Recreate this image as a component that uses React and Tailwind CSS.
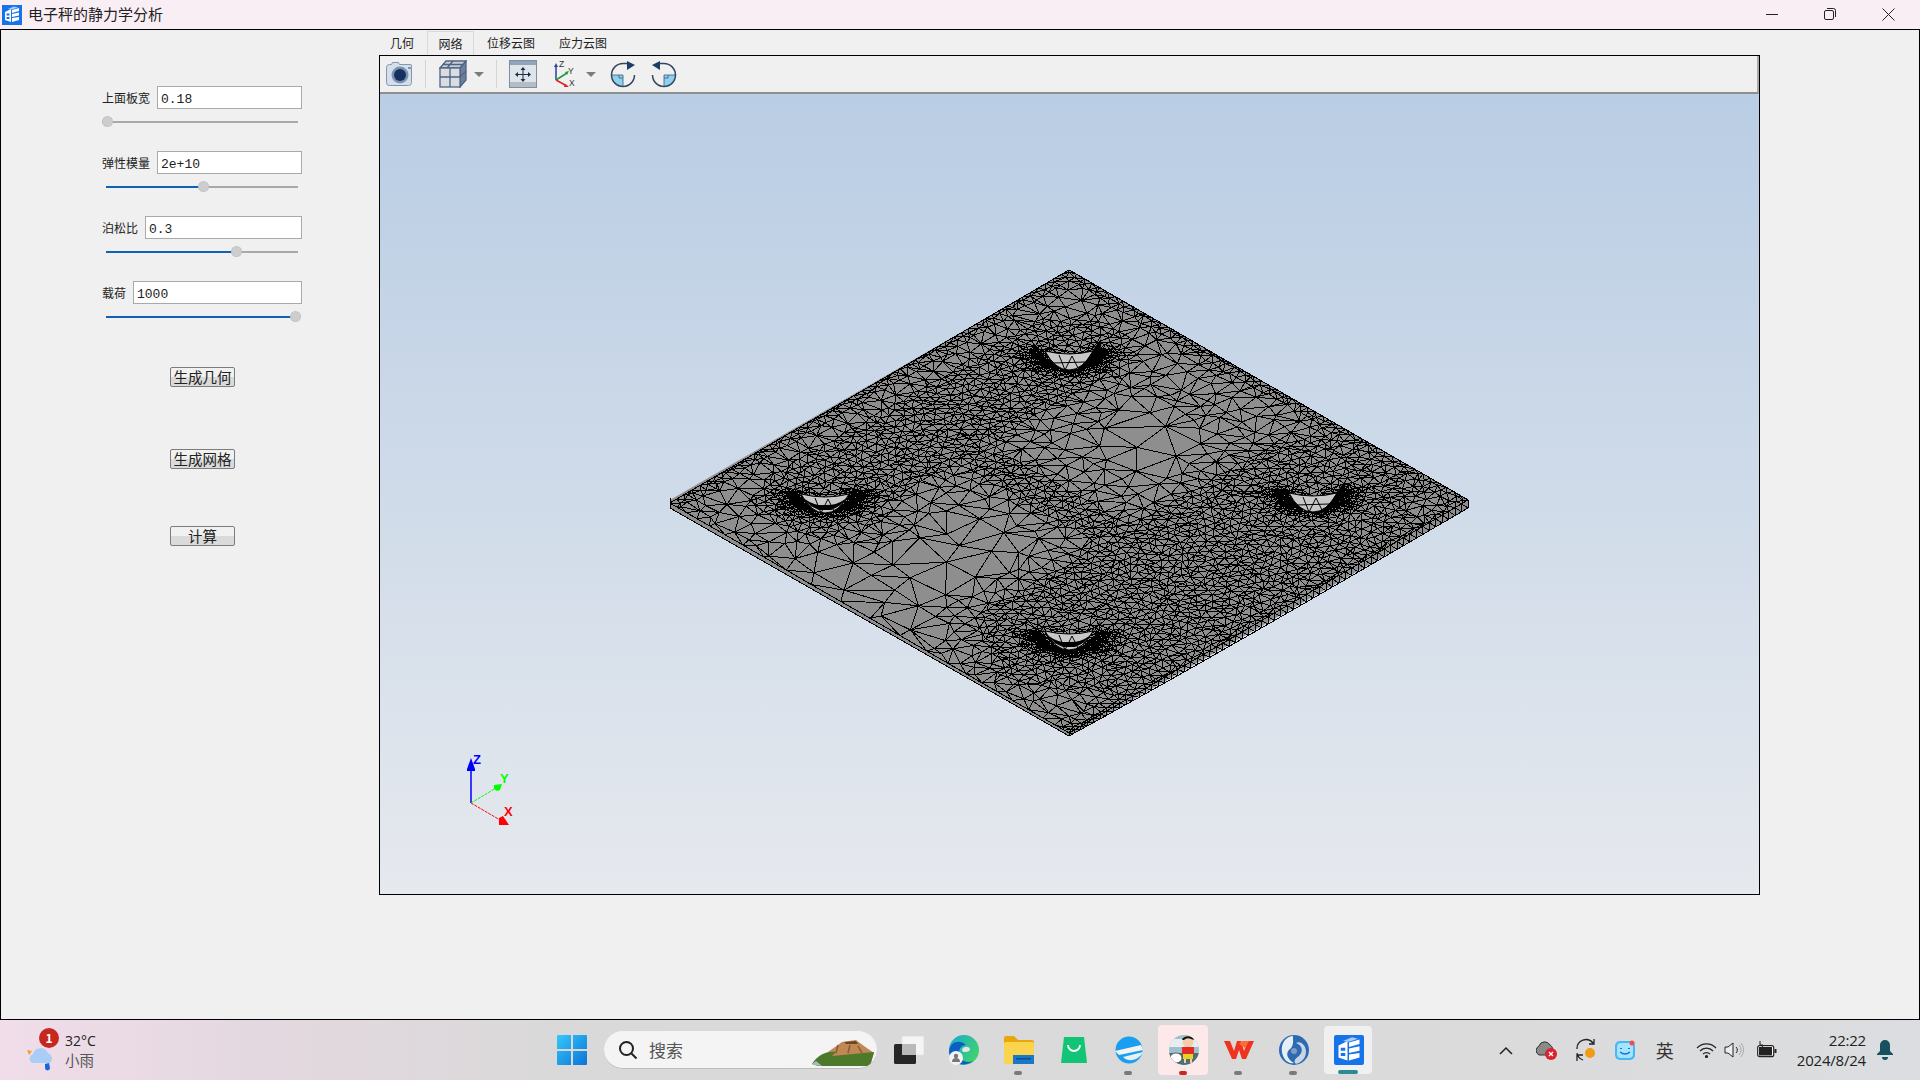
import React from 'react';

// ---- mesh of the plate: points in (u,v) on the top face, then Delaunay ----
const HOLES = [[0.17, 0.17], [0.17, 0.78], [0.78, 0.17], [0.78, 0.78]];
const toScreen = (u, v) => [1069 + (u - v) * 399, 270 + u * 230 + v * 233];

let seed = 12345;
const rnd = () => {
  seed = (seed * 1664525 + 1013904223) % 4294967296;
  return seed / 4294967296;
};

const segDist = (u, v, u0, v0, u1, v1) => {
  const du = u1 - u0;
  const dv = v1 - v0;
  const t = Math.max(0, Math.min(1, ((u - u0) * du + (v - v0) * dv) / (du * du + dv * dv)));
  return Math.hypot(u - u0 - t * du, v - v0 - t * dv);
};

// wanted element size at a point of the face
const sizeAt = (u, v) => {
  let h = 0.1;
  h = Math.min(h, 0.018 + 0.18 * Math.min(u, v));
  h = Math.min(h, 0.015 + 0.2 * (1 - u));
  h = Math.min(h, 0.07 + 0.2 * (1 - v));
  h = Math.min(h, 0.016 + 0.3 * Math.max(0, segDist(u, v, 0.17, 0.17, 0.17, 0.78) - 0.08));
  h = Math.min(h, 0.0125 + 0.3 * Math.max(0, segDist(u, v, 0.8, 0.17, 0.8, 0.78) - 0.14));
  h = Math.min(h, 0.016 + 0.4 * Math.max(0, segDist(u, v, 0.17, 0.52, 0.8, 0.52) - 0.035));
  HOLES.forEach(([a, b]) => {
    const d = Math.abs(Math.hypot(u - a, v - b) - 0.06);
    const lower = u - a + (v - b) > 0;
    h = Math.min(h, lower ? 0.003 + 0.3 * d : 0.018 + 0.2 * d);
  });
  return h;
};

const collectPoints = () => {
  const pts = [];
  const walk = (u, v, s) => {
    if (s > sizeAt(u + s / 2, v + s / 2) * 1.3 && s > 0.004) {
      walk(u, v, s / 2);
      walk(u + s / 2, v, s / 2);
      walk(u, v + s / 2, s / 2);
      walk(u + s / 2, v + s / 2, s / 2);
      return;
    }
    pts.push([
      Math.min(0.995, Math.max(0.005, u + s * (0.15 + 0.7 * rnd()))),
      Math.min(0.995, Math.max(0.005, v + s * (0.15 + 0.7 * rnd()))),
    ]);
  };
  walk(0, 0, 1);
  return pts;
};

const edgeSteps = (at) => {
  const out = [0];
  let t = 0;
  while (t < 1) {
    const [a, b] = at(t);
    t += sizeAt(a, b) * 1.05;
    if (t < 0.995) out.push(t);
  }
  out.push(1);
  return out;
};

const delaunay = (pts) => {
  const n = pts.length;
  const all = pts.concat([[-10, -10], [12, -10], [1, 14]]);
  const order = pts.map((_, i) => i).sort((a, b) => pts[a][0] - pts[b][0]);
  const circ = (a, b, c) => {
    const [ax, ay] = all[a];
    const [bx, by] = all[b];
    const [cx, cy] = all[c];
    const d = 2 * (ax * (by - cy) + bx * (cy - ay) + cx * (ay - by)) || 1e-12;
    const a2 = ax * ax + ay * ay;
    const b2 = bx * bx + by * by;
    const c2 = cx * cx + cy * cy;
    const x = (a2 * (by - cy) + b2 * (cy - ay) + c2 * (ay - by)) / d;
    const y = (a2 * (cx - bx) + b2 * (ax - cx) + c2 * (bx - ax)) / d;
    return { a, b, c, x, y, r2: (ax - x) ** 2 + (ay - y) ** 2 };
  };
  let open = [circ(n, n + 1, n + 2)];
  const closed = [];
  order.forEach((i) => {
    const [px, py] = all[i];
    const edges = new Map();
    const next = [];
    const addEdge = (p, q) => {
      const key = p < q ? p * 100000 + q : q * 100000 + p;
      edges.set(key, edges.has(key) ? null : [p, q]);
    };
    open.forEach((t) => {
      const dx = px - t.x;
      if (dx > 0 && dx * dx > t.r2) {
        closed.push(t);
        return;
      }
      if (dx * dx + (py - t.y) ** 2 < t.r2) {
        addEdge(t.a, t.b);
        addEdge(t.b, t.c);
        addEdge(t.c, t.a);
      } else {
        next.push(t);
      }
    });
    edges.forEach((e) => {
      if (e) next.push(circ(e[0], e[1], i));
    });
    open = next;
  });
  return closed.concat(open).filter((t) => t.a < n && t.b < n && t.c < n);
};

const buildMesh = () => {
  const pts = collectPoints();
  const topRight = edgeSteps((t) => [t, 0.002]);
  const topLeft = edgeSteps((t) => [0.002, t]);
  const lowRight = edgeSteps((t) => [0.998, t]);
  const lowLeft = edgeSteps((t) => [t, 0.998]);
  const wob = () => (rnd() - 0.5) * 0.0006;
  topRight.forEach((t) => pts.push([t + wob(), wob()]));
  topLeft.slice(1).forEach((t) => pts.push([wob(), t + wob()]));
  lowRight.slice(1).forEach((t) => pts.push([1 + wob(), t + wob()]));
  lowLeft.slice(1, -1).forEach((t) => pts.push([t + wob(), 1 + wob()]));

  const scr = pts.map(([u, v]) => toScreen(u, v));
  const seen = new Set();
  let d = '';
  delaunay(pts).forEach((t) => {
    [[t.a, t.b], [t.b, t.c], [t.c, t.a]].forEach(([p, q]) => {
      const key = p < q ? p * 100000 + q : q * 100000 + p;
      if (seen.has(key)) return;
      seen.add(key);
      d += `M${scr[p][0].toFixed(1)} ${scr[p][1].toFixed(1)}L${scr[q][0].toFixed(1)} ${scr[q][1].toFixed(1)}`;
    });
  });

  // lower right side face: zig-zag band
  const depthR = (t) => 8 - 5 * t * t * t;
  lowRight.forEach((t, i) => {
    const [x, y] = toScreen(1, t);
    d += `M${x.toFixed(1)} ${y.toFixed(1)}L${x.toFixed(1)} ${(y + depthR(t)).toFixed(1)}`;
    if (i > 0) {
      const t0 = lowRight[i - 1];
      const [x0, y0] = toScreen(1, t0);
      d += `M${x0.toFixed(1)} ${(y0 + depthR(t0)).toFixed(1)}L${x.toFixed(1)} ${y.toFixed(1)}`;
      d += `M${x0.toFixed(1)} ${(y0 + depthR(t0)).toFixed(1)}L${x.toFixed(1)} ${(y + depthR(t)).toFixed(1)}`;
    }
  });
  // lower left side face is nearly edge-on: only the outer line
  d += 'M670 498V508L1069 736';
  return d;
};

const MESH = buildMesh();

const Boss = ({ cx, cy, soft }) => (
  <g>
    <path
      d={`M${cx - 24} ${cy + 6}Q${cx} ${cy + 12} ${cx + 24} ${cy + 6}Q${cx + 14} ${cy + 25} ${cx} ${cy + 25}Q${cx - 14} ${cy + 25} ${cx - 24} ${cy + 6}Z`}
      fill="#c8c8c8"
      stroke="#000"
    />
    <path
      d={`M${cx - 10} ${cy + 10}L${cx - 4} ${cy + 25}L${cx + 3} ${cy + 11}L${cx + 9} ${cy + 23}M${cx - 16} ${cy + 18}L${cx + 16} ${cy + 17}`}
      fill="none"
      stroke="#000"
    />
    {soft ? (
      <path
        d={`M${cx + 32} ${cy - 6}A33 30 0 0 1 ${cx + 6} ${cy + 27}Q${cx + 18} ${cy + 17} ${cx + 26} ${cy + 2}Z`}
        fill="#000"
      />
    ) : (
      <path
        d={`M${cx - 32} ${cy - 6}A33 31 0 0 0 ${cx + 32} ${cy - 6}L${cx + 28} ${cy + 1}Q${cx + 20} ${cy + 17} ${cx + 6} ${cy + 22}H${cx - 6}Q${cx - 20} ${cy + 17} ${cx - 28} ${cy + 1}Z`}
        fill="#000"
      />
    )}
  </g>
);

const PlateView = () => (
  <svg viewBox="380 94 1379 800" className="block w-[1379px] h-[800px]">
    <polygon points="670,500 1069,270 1468,500 1468,508 1069,736 670,508" fill="#8e8e8e" />
    <path d={MESH} stroke="#000" strokeWidth="1" fill="none" shapeRendering="crispEdges" />
    <Boss cx={1069} cy={345} soft />
    <Boss cx={825} cy={488} />
    <Boss cx={1313} cy={487} soft />
    <Boss cx={1069} cy={625} />
    {/* axes */}
    <path d="M471 803V770" stroke="#0000ff" strokeWidth="1.5" />
    <path d="M471 758l-4 11v2h8v-2z" fill="#0000ff" />
    <path d="M471 803L496 788" stroke="#00ff00" strokeWidth="1" strokeDasharray="3 1" />
    <path d="M494 785l8-1-2 6-3 1-3-2z" fill="#00ff00" />
    <path d="M471 803L500 820" stroke="#ff0000" strokeWidth="1" strokeDasharray="3 1" />
    <path d="M499 818l4-2 6 9h-10z" fill="#ff0000" />
    <text x="473" y="764" fontSize="13" fontWeight="700" fill="#0000ff" fontFamily="Liberation Sans">Z</text>
    <text x="500" y="783" fontSize="13" fontWeight="700" fill="#00ff00" fontFamily="Liberation Sans">Y</text>
    <text x="504" y="816" fontSize="13" fontWeight="700" fill="#ff0000" fontFamily="Liberation Sans">X</text>
  </svg>
);

// ---- left panel ----
const params = [
  { label: '上面板宽', value: '0.18', handle: 0, from: 0 },
  { label: '弹性模量', value: '2e+10', handle: 96, from: 4 },
  { label: '泊松比', value: '0.3', handle: 129, from: 4 },
  { label: '载荷', value: '1000', handle: 188, from: 4 },
];

const ParamRow = ({ label, value, handle, from }) => (
  <div className="h-[65px] w-[200px]">
    <div className="flex items-center gap-[7px] h-[23px]">
      <span className="text-[12px] leading-none text-[#222] whitespace-nowrap">{label}</span>
      <input
        readOnly
        value={value}
        className="flex-1 min-w-0 h-[23px] border border-[#a9a9a9] bg-white pl-[3px] pt-[3px] text-[13px] text-[#222] outline-none [font-family:'Liberation_Mono',monospace]"
      />
    </div>
    <div className="relative h-[2px] mt-[12px] w-[196px]">
      <div className="absolute top-0 right-0 h-[2px] bg-[#a9a9a9]" style={{ left: from }} />
      <div
        className="absolute top-0 h-[2px] bg-[#0f62b0]"
        style={{ left: from, width: Math.max(0, handle + 5 - from) }}
      />
      <div
        className="absolute top-[-5px] w-[11px] h-[11px] rounded-full bg-[#cdcdcd] border border-dotted border-[#bbb]"
        style={{ left: handle }}
      />
    </div>
  </div>
);

const FormButton = ({ children, mt }) => (
  <button
    className={`${mt} block w-[65px] h-[20px] ml-[68px] rounded-[2px] border border-[#7c7c7c] bg-[linear-gradient(#f1f1f1_50%,#dadada_50%)] text-[14.5px] leading-none text-[#222]`}
  >
    {children}
  </button>
);

// ---- toolbar icons ----
const Sep = () => <div className="w-px h-[28px] bg-[#d4d4d4]" />;
const Caret = () => (
  <svg width="10" height="5" viewBox="0 0 10 5"><path d="M0 0h10L5 5z" fill="#7c7c7c" /></svg>
);

const CameraIcon = () => (
  <svg width="28" height="26" viewBox="0 0 28 26">
    <path d="M0.500 6.500a3 3 0 0 1 3-3h2l1-2h6l1 2h11.500a3 3 0 0 1 0.500 3V21.500a3 3 0 0 1-3 3H3.500a3 3 0 0 1-3-3Z" fill="#d4dfeb" stroke="#7f97b2" />
    <circle cx="14" cy="14" r="8.500" fill="#7c93ae" />
    <circle cx="14" cy="14" r="6" fill="#16305f" />
    <rect x="22" y="6" width="3" height="2" fill="#7f97b2" />
  </svg>
);

const CubeIcon = () => (
  <svg width="28" height="28" viewBox="0 0 28 28" fill="none" stroke="#4d6484" strokeWidth="1.3">
    <path d="M1 8L7 1H27L21 8Z" fill="#c9ced6" />
    <path d="M21 8L27 1V20L21 27Z" fill="#6d7f98" />
    <rect x="1" y="8" width="20" height="19" fill="#d9dde3" />
    <path d="M11 8V27M1 17H21M14 1L8 8M24 4.500H4M21 17L27 11" />
  </svg>
);

const FitIcon = () => (
  <svg width="28" height="28" viewBox="0 0 28 28">
    <rect x="0.500" y="0.500" width="27" height="27" fill="#dfe3ea" stroke="#7f8ea3" />
    <rect x="1" y="1" width="26" height="4" fill="#8fa3bd" />
    <rect x="1" y="22" width="26" height="5" fill="#b6bcc6" />
    <path d="M14 8v13M7.500 14.500h13" stroke="#1d2d44" strokeWidth="1" />
    <path d="M14 7l-2.500 3h5zM14 22l-2.500-3h5zM6 14.500l3-2.500v5zM22 14.500l-3-2.500v5z" fill="#1d2d44" />
  </svg>
);

const AxisIcon = () => (
  <svg width="26" height="30" viewBox="0 0 26 30" className="[font-family:'Liberation_Sans',sans-serif]">
    <path d="M4 21V7" stroke="#2345a3" strokeWidth="1.500" />
    <path d="M4 4l-2 4h4z" fill="#2345a3" />
    <path d="M4 21L15 14" stroke="#1f9a3a" strokeWidth="1.500" />
    <path d="M17 12l-4 1 2 3z" fill="#1f9a3a" />
    <path d="M4 21L15 27" stroke="#e02020" strokeWidth="1.500" />
    <path d="M17 28l-4-3-1 3z" fill="#e02020" />
    <text x="7" y="8" fontSize="8.500" fill="#333">Z</text>
    <text x="16" y="15" fontSize="8.500" fill="#333">Y</text>
    <text x="17" y="27" fontSize="8.500" fill="#333">X</text>
  </svg>
);

const RotateIcon = ({ flip }) => (
  <svg width="26" height="27" viewBox="0 0 26 27" className={flip ? '-scale-x-100' : ''}>
    <path d="M13 14H2A11 11 0 0 0 13 25Z" fill="#8fd0ef" />
    <path d="M2 14H13V25M9 14v3h4" fill="none" stroke="#3b5c7a" strokeWidth="0.800" />
    <path d="M24.500 14A11.500 11.500 0 1 1 13 2.500H17" fill="none" stroke="#31465f" strokeWidth="1.500" />
    <path d="M17 0L25 4L17 9Z" fill="#1c3f68" />
  </svg>
);

const Toolbar = () => (
  <div className="flex items-center h-[38px] bg-[#f0f0f0] border-b-2 border-[#8f8f8f] border-r-2 border-r-[#a9a9a9] pl-[6px]">
    <CameraIcon />
    <div className="ml-[11px]"><Sep /></div>
    <div className="ml-[13px]"><CubeIcon /></div>
    <div className="ml-[7px]"><Caret /></div>
    <div className="ml-[12px]"><Sep /></div>
    <div className="ml-[12px]"><FitIcon /></div>
    <div className="ml-[15px]"><AxisIcon /></div>
    <div className="ml-[8px]"><Caret /></div>
    <div className="ml-[14px]"><RotateIcon /></div>
    <div className="ml-[15px]"><RotateIcon flip /></div>
  </div>
);

// ---- title bar ----
const AppLogo = ({ size }) => (
  <svg width={size} height={size} viewBox="0 0 20 20">
    <rect width="20" height="20" fill="#1673ea" />
    <path d="M3 7L9 4V17L3 15Z" fill="#fff" />
    <path d="M10 5L17 3V6L10 8ZM10 9L17 7.500V10.500L10 12ZM10 13L17 12V15L10 17Z" fill="#fff" />
    <path d="M4.500 8.500h3v2h-3zM4.500 12h3v2h-3z" fill="#1673ea" />
    <path d="M6 4L12 1.500L16 2.500L10 4.500Z" fill="#a9cdf9" />
  </svg>
);

const TitleBar = () => (
  <div className="flex items-center h-[29px] bg-[#f9eef4] shrink-0">
    <div className="ml-[2px]"><AppLogo size={20} /></div>
    <span className="ml-[6px] -mt-[2px] text-[15px] leading-none text-[#222]">电子秤的静力学分析</span>
    <div className="ml-auto flex items-center mr-[3px] -mt-[1px]">
      <div className="w-[58px] flex justify-center">
        <svg width="12" height="12" viewBox="0 0 12 12"><path d="M0 6.500h12" stroke="#222" /></svg>
      </div>
      <div className="w-[58px] flex justify-center">
        <svg width="12" height="12" viewBox="0 0 12 12" fill="none" stroke="#222">
          <rect x="0.500" y="2.500" width="9" height="9" rx="1.500" />
          <path d="M3 0.500h6.500a2 2 0 0 1 2 2V9" />
        </svg>
      </div>
      <div className="w-[58px] flex justify-center">
        <svg width="13" height="13" viewBox="0 0 13 13"><path d="M0.500 0.500l12 12M12.500 0.500l-12 12" stroke="#222" /></svg>
      </div>
    </div>
  </div>
);

// ---- taskbar icons ----
const WinLogo = () => (
  <svg width="30" height="30" viewBox="0 0 30 30">
    <defs>
      <linearGradient id="win" x1="0" y1="0" x2="1" y2="1">
        <stop offset="0" stopColor="#35c8fb" />
        <stop offset="1" stopColor="#0b73d8" />
      </linearGradient>
    </defs>
    <path d="M0 1a1 1 0 0 1 1-1h13v14H0zM16 0h13a1 1 0 0 1 1 1v13H16zM0 16h14v14H1a1 1 0 0 1-1-1zM16 16h14v13a1 1 0 0 1-1 1H16z" fill="url(#win)" />
  </svg>
);

const TaskViewIcon = () => (
  <svg width="30" height="28" viewBox="0 0 30 28">
    <rect x="8" y="0" width="22" height="19" rx="1.500" fill="#f5f5f5" stroke="#e2e2e2" />
    <rect x="0" y="8" width="22" height="20" rx="1.500" fill="#262626" />
    <rect x="8" y="8" width="14" height="11" fill="#b9b9b9" />
  </svg>
);

const EdgeIcon = () => (
  <svg width="30" height="30" viewBox="0 0 30 30">
    <defs>
      <linearGradient id="edg" x1="0" y1="0" x2="1" y2="0.600">
        <stop offset="0" stopColor="#1aa8d8" />
        <stop offset="1" stopColor="#3fd26e" />
      </linearGradient>
    </defs>
    <circle cx="15" cy="15" r="15" fill="url(#edg)" />
    <path d="M0 16C1 6 12 4 17 10C13 10 10 13 10 18C10 24 16 29 24 26C18 31 8 31 3 24C1 22 0 19 0 16Z" fill="#0c5ec2" />
    <path d="M13 15C14 11 20 11 21 14C21 17 17 17 14 17Z" fill="#e6e6e6" />
    <circle cx="7" cy="23" r="7" fill="#f3f3f3" />
    <circle cx="7" cy="21" r="2.200" fill="#777" />
    <path d="M3 27a4 4 0 0 1 8 0z" fill="#777" />
  </svg>
);

const FolderIcon = () => (
  <svg width="30" height="28" viewBox="0 0 30 28">
    <path d="M0 2a2 2 0 0 1 2-2h8l4 4h14a2 2 0 0 1 2 2v4H0z" fill="#e8a80c" />
    <rect x="0" y="6" width="30" height="22" rx="2" fill="#fbd44e" />
    <rect x="9" y="19" width="21" height="9" fill="#1a78c8" />
    <rect x="12" y="22" width="15" height="1.500" fill="#0c4f8c" />
  </svg>
);

const ShopIcon = () => (
  <svg width="26" height="26" viewBox="0 0 26 26">
    <path d="M3 0H23L26 26H0Z" fill="#12c476" />
    <path d="M7 8a6 6 0 0 0 12 0" fill="none" stroke="#fff" strokeWidth="1.800" />
  </svg>
);

const IeIcon = () => (
  <svg width="28" height="28" viewBox="0 0 28 28">
    <circle cx="14" cy="14" r="13.500" fill="#1a9ff0" />
    <path d="M0 15L26 9L28 14L4 19Z" fill="#f3f3f3" />
    <path d="M28 16C24 24 14 27 8 21L20 18Z" fill="#e9f1f7" />
  </svg>
);

const ShinIcon = () => (
  <svg width="30" height="30" viewBox="0 0 30 30">
    <defs><clipPath id="shin"><circle cx="15" cy="15" r="15" /></clipPath></defs>
    <g clipPath="url(#shin)">
      <rect width="30" height="30" fill="#9fc0cc" />
      <rect y="4" width="30" height="8" fill="#e7eef0" />
      <rect y="18" width="30" height="12" fill="#4d6f74" />
      <ellipse cx="7" cy="23" rx="6" ry="5" fill="#fff" stroke="#333" strokeWidth="0.700" />
      <circle cx="19" cy="7" r="5.500" fill="#f5cdaa" />
      <path d="M13 5C14 0 24 0 25 5L22 4Q18 2 15 5Z" fill="#151515" />
      <rect x="13" y="12" width="12" height="7" fill="#e02b26" />
      <rect x="14" y="19" width="10" height="5" fill="#e9d21b" />
      <rect x="15" y="24" width="2" height="4" fill="#f5cdaa" />
      <rect x="21" y="24" width="2" height="4" fill="#f5cdaa" />
    </g>
  </svg>
);

const WpsIcon = () => (
  <svg width="30" height="20" viewBox="0 0 30 20">
    <path d="M0 1H6L10 11L13 1H17L20 11L24 1H30L22 19H18L15 10L12 19H8Z" fill="#f0331f" />
    <path d="M15 4L18 1H25L21 8Z" fill="#ff6a3a" />
  </svg>
);

const SwirlIcon = () => (
  <svg width="30" height="30" viewBox="0 0 30 30">
    <circle cx="15" cy="15" r="15" fill="#2c6ab4" />
    <path d="M14 1C4 2 0 13 5 23C7 27 12 29 15 28C8 24 6 18 11 14C15 11 14 5 14 1Z" fill="#e7eef6" />
    <path d="M17 8C23 10 25 16 20 21C16 24 14 26 17 29C25 27 29 19 26 12C24 8 20 6 17 8Z" fill="#c9d5e3" />
    <circle cx="15" cy="16" r="3" fill="#7d9cc2" />
  </svg>
);

const Volcano = () => (
  <svg width="62" height="28" viewBox="0 0 62 28">
    <path d="M16 13L30 3L44 1L52 7L62 14L58 27H8Z" fill="#c08855" />
    <path d="M32 3L44 2L46 5L34 5Z" fill="#6b4526" />
    <path d="M0 25C6 16 14 12 24 13L20 17L62 13L58 27H6Z" fill="#4d7a2a" />
    <path d="M26 6L24 14M38 6L36 14M46 7L50 14" stroke="#8a5a32" strokeWidth="1.500" />
    <path d="M0 25Q4 27 10 27L4 22Z" fill="#a8bcc0" />
  </svg>
);

const tiles = [
  { icon: <TaskViewIcon />, dot: null },
  { icon: <EdgeIcon />, dot: null },
  { icon: <FolderIcon />, dot: 'bg-[#7a7a7a]' },
  { icon: <ShopIcon />, dot: null },
  { icon: <IeIcon />, dot: 'bg-[#7a7a7a]' },
  { icon: <ShinIcon />, dot: 'bg-[#c9261f]', bg: 'bg-[#fde8ea]' },
  { icon: <WpsIcon />, dot: 'bg-[#7a7a7a]' },
  { icon: <SwirlIcon />, dot: 'bg-[#7a7a7a]' },
];

const Tile = ({ icon, dot, bg }) => (
  <div className="relative w-[55px] h-[60px] flex items-center justify-center">
    {bg && <div className={`absolute left-[2px] top-[5px] w-[50px] h-[50px] rounded-[4px] ${bg}`} />}
    <div className="relative flex">{icon}</div>
    {dot && <div className={`absolute bottom-[5px] left-[23px] w-[8px] h-[4px] rounded-full ${dot}`} />}
  </div>
);

const Taskbar = () => (
  <div className="relative flex items-center h-[60px] shrink-0 bg-[linear-gradient(90deg,#f0dde9_0%,#e3d8df_14%,#d9d9d9_30%,#dadada_70%,#dcdde0_100%)]">
    {/* weather */}
    <div className="w-[544px] shrink-0 flex items-center pl-[27px]">
      <div className="relative w-[30px] h-[46px]">
        <svg width="30" height="26" viewBox="0 0 30 26" className="absolute left-0 top-[20px]">
          <path d="M0 3l5 1-3 4z" fill="#f0a030" />
          <path d="M5 16a5 5 0 0 1 1-9 8 8 0 0 1 15-1 6 6 0 0 1 2 10z" fill="#a9cdf5" />
          <path d="M18 17l4-1 1 5a2.500 2.500 0 0 1-5 0z" fill="#1467e0" />
        </svg>
        <div className="absolute left-[12px] top-[1px] w-[20px] h-[20px] rounded-full bg-[#c6281f] text-white text-[12px] font-bold leading-[20px] text-center">1</div>
      </div>
      <div className="ml-[8px] leading-none">
        <div className="text-[14px] leading-[19px] text-[#222] [font-family:'Open_Sans',sans-serif]">32°C</div>
        <div className="text-[14.5px] leading-[20px] text-[#555]">小雨</div>
      </div>
    </div>
    <Tile icon={<WinLogo />} />
    <div className="w-[5px] shrink-0" />
    {/* search */}
    <div className="relative w-[273px] h-[38px] shrink-0 flex items-center rounded-full bg-[#f4f4f4] border-b border-[#bdbdbd] overflow-hidden">
      <svg width="20" height="20" viewBox="0 0 20 20" className="ml-[14px]" fill="none" stroke="#222" strokeWidth="2">
        <circle cx="8.500" cy="8.500" r="6.500" /><path d="M13.500 13.500l5 5" />
      </svg>
      <span className="ml-[11px] text-[17px] leading-none text-[#555]">搜索</span>
      <div className="absolute right-[3px] bottom-[1px]"><Volcano /></div>
    </div>
    <div className="w-[4px] shrink-0" />
    {tiles.map((t, i) => <Tile key={i} {...t} />)}
    {/* running app */}
    <div className="relative w-[55px] h-[60px] flex items-center justify-center">
      <div className="absolute left-[3px] top-[6px] w-[48px] h-[48px] rounded-[4px] bg-[#f0f0f0]" />
      <div className="relative flex rounded-[2px] overflow-hidden"><AppLogo size={30} /></div>
      <div className="absolute bottom-[6px] left-[17px] w-[20px] h-[4px] rounded-full bg-[#2b8c93]" />
    </div>
    {/* tray */}
    <div className="ml-auto flex items-center mr-[27px]">
      <svg width="14" height="9" viewBox="0 0 14 9" fill="none" stroke="#222" strokeWidth="1.500" className="mr-[23px]"><path d="M1 8l6-6 6 6" /></svg>
      <svg width="22" height="20" viewBox="0 0 22 20" className="mr-[17px]">
        <path d="M3 15a5 5 0 0 1 0-9 6 6 0 0 1 11-1 5 5 0 0 1 2 7v3z" fill="#8a8a8a" stroke="#333" />
        <circle cx="15" cy="14" r="6" fill="#d9232d" />
        <path d="M13 12l4 4M17 12l-4 4" stroke="#fff" strokeWidth="1.300" />
      </svg>
      <svg width="24" height="24" viewBox="0 0 24 24" fill="none" className="mr-[16px]">
        <path d="M2 11a9 9 0 0 1 16-6M19 1v5h-5M2 15a9 9 0 0 0 6 7M2 23v-6h6" stroke="#222" strokeWidth="1.300" />
        <circle cx="15" cy="15" r="5" fill="#f29a13" />
      </svg>
      <svg width="20" height="20" viewBox="0 0 20 20" className="mr-[21px]">
        <rect y="1" width="20" height="19" rx="5" fill="#45b7f8" />
        <rect x="2" y="3" width="16" height="15" rx="4" fill="#a5e4fb" />
        <path d="M6 8v1M14 8v1" stroke="#1773e5" strokeWidth="2" />
        <path d="M5 12q5 4 10 0" fill="none" stroke="#1773e5" strokeWidth="1.500" />
        <circle cx="17" cy="3" r="2.500" fill="#f24b4b" />
      </svg>
      <span className="text-[18px] leading-none text-[#333] mr-[22px]">英</span>
      <svg width="21" height="15" viewBox="0 0 21 15" fill="none" stroke="#222" strokeWidth="1.200" className="mr-[7px]">
        <path d="M1 5a13 13 0 0 1 19 0M4 8a9 9 0 0 1 13 0M7 11a5 5 0 0 1 7 0" />
        <circle cx="10.500" cy="13.500" r="1" fill="#222" />
      </svg>
      <svg width="20" height="16" viewBox="0 0 20 16" fill="none" className="mr-[13px]">
        <path d="M1 5h3l5-4v14l-5-4H1z" fill="#eee" stroke="#222" />
        <path d="M12 5a4 4 0 0 1 0 6" stroke="#222" />
        <path d="M15 3a8 8 0 0 1 0 10M17 1a11 11 0 0 1 0 14" stroke="#aaa" />
      </svg>
      <svg width="20" height="18" viewBox="0 0 20 18" className="mr-[20px]">
        <rect x="0.700" y="4.700" width="16" height="11" rx="2" fill="#fff" stroke="#222" strokeWidth="1.200" />
        <rect x="2" y="6" width="13" height="8.500" fill="#222" />
        <rect x="17.500" y="8" width="2" height="4" fill="#222" />
        <path d="M3 0v4h3l-2 5" stroke="#222" fill="none" />
      </svg>
      <div className="text-[15px] leading-[20px] text-right text-[#222] [font-family:'Open_Sans',sans-serif] tracking-[-0.2px]">
        <div>22:22</div>
        <div>2024/8/24</div>
      </div>
      <svg width="16" height="20" viewBox="0 0 16 20" className="ml-[11px]">
        <path d="M8 0a5 5 0 0 1 5 5v6l3 3v1H0v-1l3-3V5a5 5 0 0 1 5-5z" fill="#17505f" />
        <path d="M5 17h6a3 3 0 0 1-6 0z" fill="#17505f" />
      </svg>
    </div>
  </div>
);

const tabs = ['几何', '网络', '位移云图', '应力云图'];

const App = () => (
  <div className="w-screen h-screen flex flex-col overflow-hidden bg-[#f0f0f0] [font-family:'Noto_Sans_CJK_SC','Noto_Sans',sans-serif]">
    <TitleBar />
    <div className="flex-1 min-h-0 flex border border-black bg-[#f0f0f0]">
      <div className="w-[378px] shrink-0 pl-[101px] pt-[56px]">
        {params.map((p) => <ParamRow key={p.label} {...p} />)}
        <FormButton mt="mt-[21px]">生成几何</FormButton>
        <FormButton mt="mt-[62px]">生成网格</FormButton>
        <FormButton mt="mt-[57px]">计算</FormButton>
      </div>
      <div className="w-[1381px] shrink-0">
        <div className="flex items-end h-[25px] pl-[10px] text-[12px] leading-none text-[#222]">
          {tabs.map((t) => (
            <div
              key={t}
              className={`h-[24px] flex items-center justify-center ${t === '网络' ? 'w-[47px] ml-[12px] mr-[12px] border border-b-0 border-[#d9d9d9]' : t === '几何' ? 'w-[26px]' : 'w-[50px] mr-[22px]'}`}
            >
              {t}
            </div>
          ))}
        </div>
        <div className="h-[840px] border border-black">
          <Toolbar />
          <div className="h-[800px] bg-linear-to-b from-[#b9cde4] to-[#e6e9ee]">
            <PlateView />
          </div>
        </div>
      </div>
    </div>
    <Taskbar />
  </div>
);

export default App;
